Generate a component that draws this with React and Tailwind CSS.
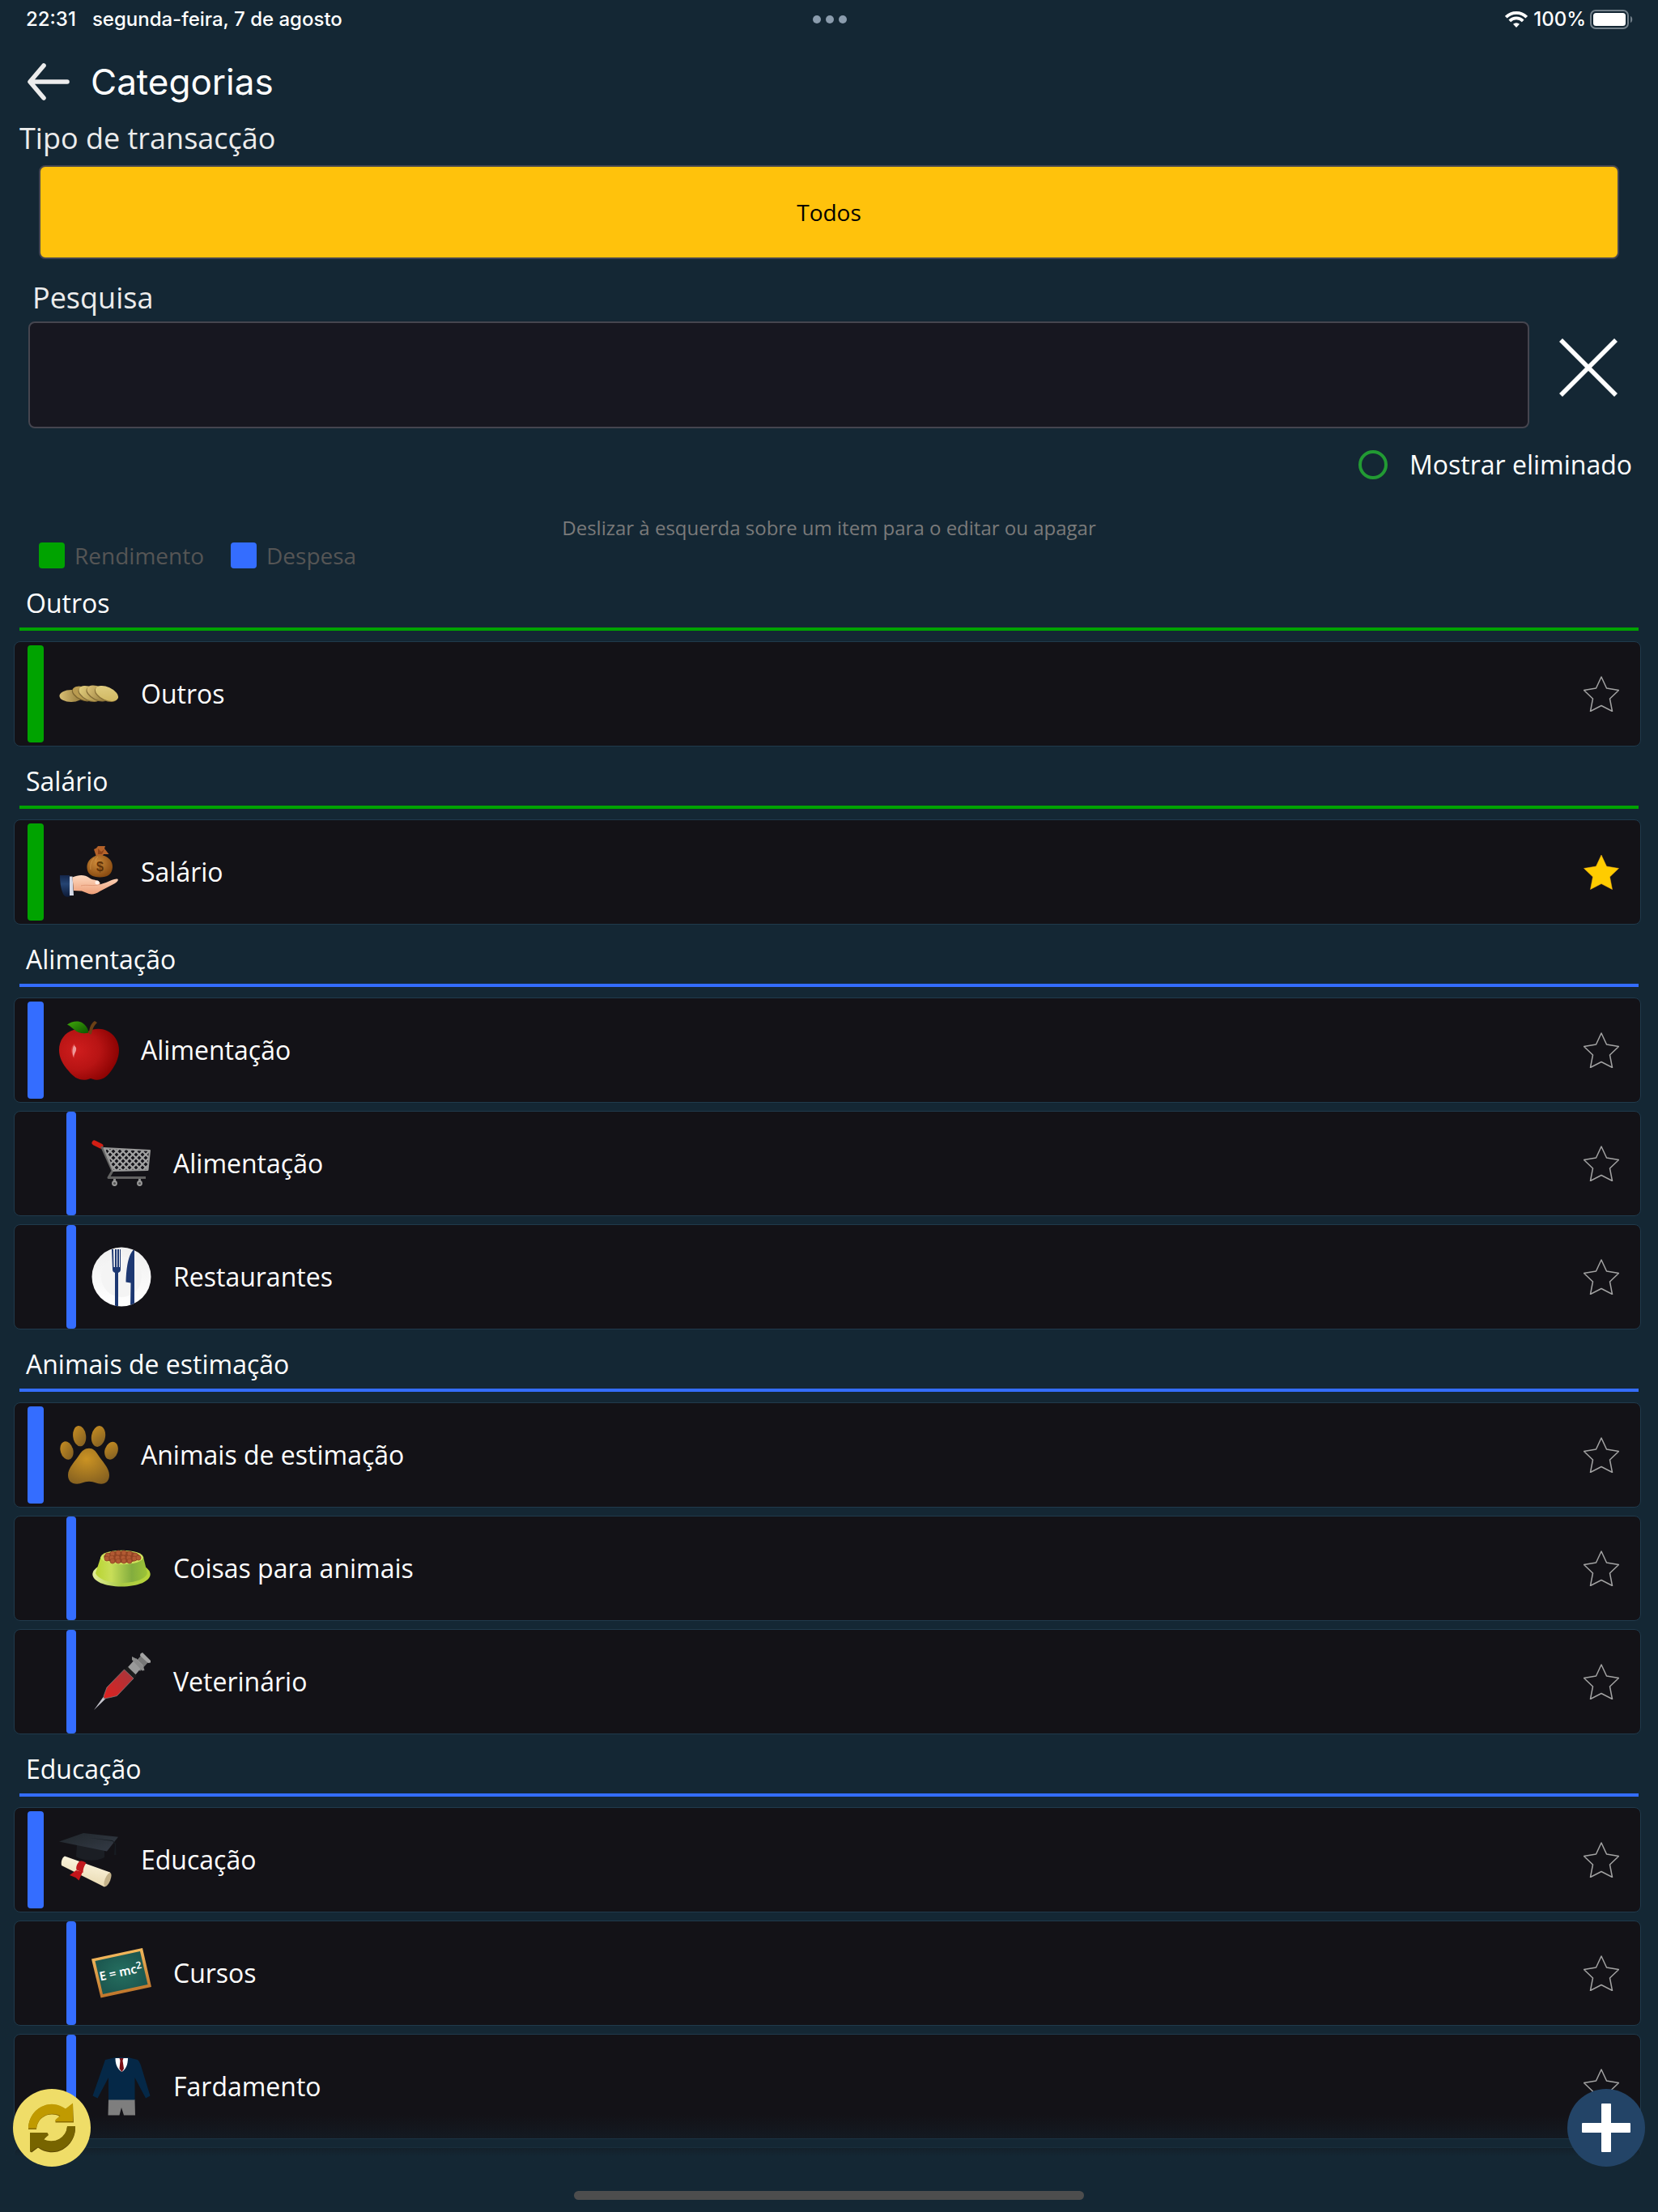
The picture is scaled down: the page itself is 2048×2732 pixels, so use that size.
import React, { useState } from "react";

const GREEN = { bar: "bg-[#00a300]" };
const BLUE = { bar: "bg-[#346dff]" };

function Svg({ children }) {
  return (
    <svg viewBox="0 0 74 74" className="size-[74px] shrink-0" aria-hidden="true">
      {children}
    </svg>
  );
}

function Coins() {
  return (
    <Svg>
      <defs>
        <linearGradient id="coinA" x1="0" x2="1">
          <stop offset="0" stopColor="#d9bf74" />
          <stop offset="1" stopColor="#8f7536" />
        </linearGradient>
        <linearGradient id="coinB" x1="0" x2="1">
          <stop offset="0" stopColor="#e0cc7c" />
          <stop offset="1" stopColor="#a98d45" />
        </linearGradient>
        <linearGradient id="coinC" x1="0" y1="0" x2="1" y2="1">
          <stop offset="0" stopColor="#e3d086" />
          <stop offset="1" stopColor="#cdb45c" />
        </linearGradient>
      </defs>
      <ellipse cx="15" cy="39.500" rx="14.500" ry="7.500" fill="url(#coinA)" />
      <ellipse cx="29" cy="37.500" rx="14" ry="7.500" transform="rotate(24 29 37.500)" fill="#7d6630" />
      <ellipse cx="30" cy="36.500" rx="14" ry="7.500" transform="rotate(24 30 36.500)" fill="#b99b50" />
      <ellipse cx="37" cy="37.500" rx="14.500" ry="8" transform="rotate(26 37 37.500)" fill="#87703a" />
      <ellipse cx="38" cy="36.500" rx="14.500" ry="8" transform="rotate(26 38 36.500)" fill="url(#coinB)" />
      <ellipse cx="47" cy="37" rx="14.500" ry="8" transform="rotate(26 47 37)" fill="#856d36" />
      <ellipse cx="48" cy="36" rx="14.500" ry="8" transform="rotate(26 48 36)" fill="url(#coinA)" />
      <ellipse cx="58" cy="37.500" rx="15" ry="8" transform="rotate(24 58 37.500)" fill="#8b7238" />
      <ellipse cx="59" cy="36.500" rx="15" ry="8" transform="rotate(24 59 36.500)" fill="url(#coinC)" />
    </Svg>
  );
}

function HandMoney() {
  return (
    <Svg>
      <defs>
        <radialGradient id="bag" cx="0.4" cy="0.35" r="0.7">
          <stop offset="0" stopColor="#cc8a3a" />
          <stop offset="1" stopColor="#86480f" />
        </radialGradient>
        <linearGradient id="skin" x1="0" y1="0" x2="0" y2="1">
          <stop offset="0" stopColor="#fdd9c0" />
          <stop offset="1" stopColor="#ee9f78" />
        </linearGradient>
        <linearGradient id="sleeve" x1="0" y1="0" x2="0" y2="1">
          <stop offset="0" stopColor="#14264a" />
          <stop offset="0.4" stopColor="#254473" />
          <stop offset="1" stopColor="#0d1a36" />
        </linearGradient>
      </defs>
      <path d="M43 9 46 7.500 48 5h9l-1 3 5.500 7H55l-2 3h-7z" fill="#b4622a" />
      <path d="M48 8l4 4 4-3-3 6h-5z" fill="#8f4418" />
      <path d="M45 17c-7 3-11 8-10.500 15 .5 8 7 11.500 16 11.500S65.500 40 66 31c.2-7-4-11.500-10-14-4-1.500-8-1.500-11 0z" fill="url(#bag)" />
      <path d="M43 20c-3 3-5 8-4 14M48 18c-2 2-3 4-3 6" stroke="#e0a052" strokeWidth="1" fill="none" opacity=".6" />
      <text x="50.500" y="35.500" textAnchor="middle" fontSize="16" fontWeight="700" fontFamily="Liberation Sans, sans-serif" fill="#5f3208">$</text>
      <path d="M1 41h12l1 26c-5 2-8 0-9.500-4C2 57 1 49 1 41z" fill="url(#sleeve)" />
      <path d="M13 42.500h3.500L18 66h-5z" fill="#d5d9e6" />
      <path d="M16.500 43.500C24 40 32 40 37 44c4 3 8 2.500 11 4 3 1.500 3 3 2 4.500l8-2.500c5-2 10-5 14-4.500 2 1 0 3.500-3 5.500L50 61c-4 3-9 4-13 3l-9-3.500-10-.5z" fill="url(#skin)" />
      <path d="M27 54c6-2 16 1 23-1.500" stroke="#e29a78" strokeWidth="1" fill="none" />
      <circle cx="47" cy="50" r="2.500" fill="#fff0e8" />
    </Svg>
  );
}

function Apple() {
  return (
    <Svg>
      <defs>
        <radialGradient id="apple" cx="0.3" cy="0.42" r="0.75">
          <stop offset="0" stopColor="#cf1d1d" />
          <stop offset="0.5" stopColor="#b81414" />
          <stop offset="1" stopColor="#850000" />
        </radialGradient>
        <linearGradient id="leaf" x1="0" y1="0" x2="1" y2="1">
          <stop offset="0" stopColor="#3fa80a" />
          <stop offset="1" stopColor="#0d5400" />
        </linearGradient>
      </defs>
      <path d="M35 14C43 10 52 9.500 59 13c9 4 15 13 15 24 0 9-4 18-10 26-6 8-11 11-18 10.700-3-.2-5-1.200-7-1.700-2 .5-4 1.500-7 1.700-9 .3-14-3.700-20-10.700C4 54 0 46 0 37 0 25 7 15 18 12c6-1.500 12 0 17 2z" fill="url(#apple)" />
      <path d="M37 16c0-6 3-13 7-15l3 2c-4 4-6 8-7 14-1 1-3 0-3-1z" fill="#6b4015" />
      <path d="M10 5.500C16 1 24 .5 29 3.500c4 2.500 7 7 7.500 12-7 2-14 0-18-4C15 9 14 7 10 5.500z" fill="url(#leaf)" />
      <path d="M18.500 29c-5 6-4 11 0 18 1-6 4-13 0-18z" fill="#e45050" opacity=".6" />
      <path d="M18.500 31c-2.500 4-2.500 9-.5 15 0-5 4-7 3-12z" fill="#e99" />
    </Svg>
  );
}

function Cart() {
  return (
    <Svg>
      <defs>
        <pattern id="mesh" width="8" height="8" patternUnits="userSpaceOnUse" x="3" y="2">
          <rect width="8" height="8" fill="#15141a" />
          <path d="M-1-1l10 10M9-1L-1 9" stroke="#a3a3a3" strokeWidth="2.200" />
        </pattern>
      </defs>
      <path d="M3.500 11.500l8 4" stroke="#d31e14" strokeWidth="6" strokeLinecap="round" />
      <path d="M12.500 16L26 46l-5 8.500h46" stroke="#626262" strokeWidth="3" fill="none" strokeLinejoin="round" />
      <path d="M15.500 18L72 21l-2.500 24L27 46z" fill="url(#mesh)" stroke="#989898" strokeWidth="2" strokeLinejoin="round" />
      <path d="M28.500 56v4M59.500 56v4" stroke="#888" strokeWidth="3" />
      <circle cx="28.500" cy="61.500" r="2.500" fill="#555" stroke="#999" strokeWidth="1.800" />
      <circle cx="59.500" cy="61.500" r="2.500" fill="#555" stroke="#999" strokeWidth="1.800" />
    </Svg>
  );
}

function Plate() {
  return (
    <Svg>
      <defs>
        <linearGradient id="plate" x1="0" y1="0" x2="0" y2="1">
          <stop offset="0" stopColor="#efefef" />
          <stop offset="1" stopColor="#fff" />
        </linearGradient>
        <clipPath id="plateClip"><circle cx="37" cy="37" r="36.500" /></clipPath>
      </defs>
      <circle cx="37" cy="37" r="36.500" fill="url(#plate)" />
      <circle cx="37" cy="37" r="25" fill="#f4f4f4" />
      <g fill="#1d3872" clipPath="url(#plateClip)">
        <path d="M25 3h2l.5 22h1.500V3h2v22h1V3h2v22h1V3h1v25c0 2-1 3-3 4v42h-4V32c-2-1-3-2-3-4z" />
        <path d="M53 2.500V74h-5l.5-29.500-6-1C43 27 45 9 53 2.500z" />
      </g>
    </Svg>
  );
}

function Paw() {
  return (
    <Svg>
      <defs>
        <linearGradient id="paw" x1="0.2" y1="0" x2="0.9" y2="1">
          <stop offset="0" stopColor="#c38b22" />
          <stop offset="1" stopColor="#7f5d22" />
        </linearGradient>
        <radialGradient id="pad" cx="0.45" cy="0.3" r="0.8">
          <stop offset="0" stopColor="#cb9323" />
          <stop offset="1" stopColor="#825e20" />
        </radialGradient>
      </defs>
      <g fill="url(#paw)">
        <ellipse cx="9.500" cy="31.500" rx="7.800" ry="11.500" transform="rotate(-16 9.500 31.500)" />
        <ellipse cx="25.200" cy="13.700" rx="8" ry="12.700" transform="rotate(-7 25.200 13.700)" />
        <ellipse cx="48.500" cy="14" rx="8.500" ry="13" transform="rotate(10 48.500 14)" />
        <ellipse cx="64.500" cy="31.700" rx="8" ry="11.200" transform="rotate(18 64.500 31.700)" />
      </g>
      <path d="M37 28.700c5 0 8 3 11 8 5 8 14 16 14 25 0 7-4 11-10 11-6 0-8-3-15-3s-9 3-15 3c-7 0-11-4-11-11 0-9 9-17 14-25 3-5 7-8 12-8z" fill="url(#pad)" />
    </Svg>
  );
}

function Bowl() {
  const kibble = [
    [20, 21], [26, 19], [33, 18], [40, 18], [47, 19], [54, 21],
    [19, 25], [25, 24], [32, 24], [39, 24], [46, 24], [53, 25], [58, 24],
    [26, 28], [33, 28], [40, 28], [47, 28],
  ];
  return (
    <Svg>
      <defs>
        <linearGradient id="bowl" x1="0" x2="1">
          <stop offset="0" stopColor="#b9d432" />
          <stop offset="0.3" stopColor="#c8de58" />
          <stop offset="0.7" stopColor="#83ad3e" />
          <stop offset="1" stopColor="#9dc437" />
        </linearGradient>
        <linearGradient id="bowlBase" x1="0" x2="1">
          <stop offset="0" stopColor="#e4f09a" />
          <stop offset="0.5" stopColor="#a9c944" />
          <stop offset="1" stopColor="#b7d53a" />
        </linearGradient>
      </defs>
      <path d="M1.300 44C2 39 6 36 10 34h54c4 2 8 5 8.700 10 0 9-15 15.500-35.700 15.500S1.300 53 1.300 44z" fill="url(#bowlBase)" />
      <path d="M11.500 23h52.500l5 20c-2 7-15 12-32 12S8 50 5 43z" fill="url(#bowl)" />
      <ellipse cx="37.700" cy="23.500" rx="26.400" ry="8.700" fill="#cfe25c" />
      <ellipse cx="37.700" cy="22.800" rx="22.500" ry="7.300" fill="#8f4424" />
      {kibble.map(([x, y]) => (
        <circle key={x + "-" + y} cx={x} cy={y} r="3" fill="#b15a33" stroke="#934524" strokeWidth=".8" />
      ))}
    </Svg>
  );
}

function Syringe() {
  return (
    <Svg>
      <defs>
        <linearGradient id="blood" x1="0" y1="1" x2="1" y2="0">
          <stop offset="0" stopColor="#e0201f" />
          <stop offset="1" stopColor="#a2383e" />
        </linearGradient>
      </defs>
      <path d="M3 72L14.500 56l3 2z" fill="#c4c4cc" />
      <path d="M52 15l10-11 8 9-10 11z" fill="#777" />
      <path d="M60.500 2.500 63 1l10 10v2.500l-3 .5-10-9z" fill="#a4a4a4" />
      <path d="M45 19l10-11 9 9-11 13z" fill="#9a9a9a" />
      <path d="M50 6l4 2 10 10 1.500 5-3 .5L50 10z" fill="#8a8a8a" />
      <path d="M41.500 21.500l3-3L56 29.500l-3 3.500z" fill="#1c1c1c" />
      <path d="M40.500 22L52 33 31.500 54.500l-8 2-8 1.500L15 55l4-11z" fill="url(#blood)" stroke="#7d7d7d" strokeWidth=".8" />
    </Svg>
  );
}

function Graduation() {
  return (
    <Svg>
      <defs>
        <linearGradient id="cap" x1="0" y1="0" x2="1" y2="1">
          <stop offset="0" stopColor="#20262b" />
          <stop offset="1" stopColor="#343b46" />
        </linearGradient>
        <linearGradient id="scroll" x1="0.3" y1="0" x2="0" y2="1">
          <stop offset="0" stopColor="#fdf6e0" />
          <stop offset="1" stopColor="#e3d2a6" />
        </linearGradient>
      </defs>
      <path d="M22 18l34 5v11c-8 5-26 5-35-1z" fill="#1b1e24" />
      <path d="M0 14.500L30 4l43 4.700L59 26.500z" fill="url(#cap)" />
      <path d="M38 10l28 4 3 4-1 13h2.500l-.5-14-4-4z" fill="#171c22" />
      <path d="M7 32.500l56 20c2 6-2 15-7 18L3 44c-1-5 1-10 4-11.500z" fill="url(#scroll)" />
      <ellipse cx="60" cy="61.500" rx="3.300" ry="9" transform="rotate(22 60 61.500)" fill="#c4b28a" />
      <path d="M25 39c3-1 6 0 8.500 2-3 4-4 8-4 12l-8-3.500c-1-4 1-8 3.500-10.500z" fill="#c21a1e" />
      <path d="M21 50l8 2-4.500 10.500-4-3.500-7.500-3z" fill="#c3141a" />
    </Svg>
  );
}

function Chalkboard() {
  return (
    <Svg>
      <defs>
        <linearGradient id="wood" x1="0" y1="0" x2="0.200" y2="1">
          <stop offset="0" stopColor="#fcc566" />
          <stop offset="1" stopColor="#bf752b" />
        </linearGradient>
        <radialGradient id="slate">
          <stop offset="0" stopColor="#256f60" />
          <stop offset="1" stopColor="#1c5850" />
        </radialGradient>
      </defs>
      <path d="M0 19.500L63 6l11 48-62.500 13.500z" fill="url(#wood)" />
      <path d="M4.500 22L60 10l9.500 41-55.500 12z" fill="url(#slate)" />
      <text x="11" y="46.500" transform="rotate(-12 11 46.500)" fontSize="15" fontWeight="600" fontFamily="Noto Sans, sans-serif" fill="#fff">
        E = mc<tspan dy="-5" fontSize="12">2</tspan>
      </text>
    </Svg>
  );
}

function Uniform() {
  return (
    <Svg>
      <path d="M21 53h32.500l.5 19.600H40L37 63l-2.500 9.600H20.500z" fill="#7e7e7e" />
      <path d="M17 4l13-3h15l12 3c2 2 3 4 4 7l11.500 37.500L67 51.500 53.500 26v27.500H21V26L7.500 51.500 1.500 48.500z" fill="#052847" />
      <path d="M29.500 2h15.500c0 7-2 13-7.500 17-6-4-8-10-8-17z" fill="#fff" />
      <path d="M34.500 2h5l-1 3 1.500 10-2.500 4-3-4 1-10z" fill="#7b1016" />
    </Svg>
  );
}

function Star({ filled }) {
  return (
    <svg viewBox="0 0 44 44" className="size-11" aria-hidden="true">
      <path
        d="M22 1l6.500 14 15 2.500L32.500 28l3 15.500L22 36.500 8.500 43.500l3-15.500L.5 17.500l15-2.500z"
        fill={filled ? "#ffcc00" : "none"}
        stroke={filled ? "#ffb21a" : "#a3a3a3"}
        strokeWidth={filled ? 0.5 : 1.5}
        strokeLinejoin="round"
      />
    </svg>
  );
}

const groups = [
  { name: "Outros", tone: GREEN, items: [{ name: "Outros", icon: Coins }] },
  { name: "Salário", tone: GREEN, items: [{ name: "Salário", icon: HandMoney, fav: true }] },
  {
    name: "Alimentação",
    tone: BLUE,
    items: [
      { name: "Alimentação", icon: Apple },
      { name: "Alimentação", icon: Cart, child: true },
      { name: "Restaurantes", icon: Plate, child: true },
    ],
  },
  {
    name: "Animais de estimação",
    tone: BLUE,
    items: [
      { name: "Animais de estimação", icon: Paw },
      { name: "Coisas para animais", icon: Bowl, child: true },
      { name: "Veterinário", icon: Syringe, child: true },
    ],
  },
  {
    name: "Educação",
    tone: BLUE,
    items: [
      { name: "Educação", icon: Graduation },
      { name: "Cursos", icon: Chalkboard, child: true },
      { name: "Fardamento", icon: Uniform, child: true },
      { child: true },
    ],
  },
];

function Row({ item, tone }) {
  const [fav, setFav] = useState(!!item.fav);
  const Icon = item.icon;
  return (
    <li className="ml-[17px] mr-[21px] flex h-[130px] items-center rounded-lg border border-[#203a4c] bg-[#131217] pr-[26px]">
      {item.child ? (
        <span className={"ml-16 mr-[19px] h-32 w-3 shrink-0 rounded " + tone.bar} />
      ) : (
        <span className={"ml-4 mr-[19px] h-[120px] w-5 shrink-0 rounded " + tone.bar} />
      )}
      {Icon && (
        <>
          <Icon />
          <span className="ml-[27px] flex-1 text-[32px] leading-[44px]">{item.name}</span>
          <button type="button" aria-label={"Favorito: " + item.name} aria-pressed={fav} onClick={() => setFav(!fav)}>
            <Star filled={fav} />
          </button>
        </>
      )}
    </li>
  );
}

function StatusBar() {
  return (
    <div className="grid h-12 shrink-0 grid-cols-3 items-center pl-8 pr-[30px] font-['Inter',sans-serif] text-[24px] leading-8 font-medium">
      <div className="flex gap-5">
        <span>22:31</span>
        <span>segunda-feira, 7 de agosto</span>
      </div>
      <div className="flex justify-center gap-1.5">
        <span className="size-2.5 rounded-full bg-[#8b9cad]" />
        <span className="size-2.5 rounded-full bg-[#8b9cad]" />
        <span className="size-2.5 rounded-full bg-[#8b9cad]" />
      </div>
      <div className="flex items-center justify-end">
        <svg viewBox="0 0 28 20" className="h-5 w-7" aria-hidden="true">
          <g fill="none" stroke="#fff" strokeWidth="3.800">
            <path d="M1.300 7.200a18 18 0 0 1 25.400 0" />
            <path d="M5.800 11.800a11.600 11.600 0 0 1 16.400 0" />
          </g>
          <path d="M14 20l-4-4.200a5.800 5.800 0 0 1 8 0z" fill="#fff" />
        </svg>
        <span className="ml-[7px]">100%</span>
        <svg viewBox="0 0 54 24" className="ml-[5px] h-6 w-[54px]" aria-hidden="true">
          <rect x="1" y="1" width="46" height="22" rx="6" fill="none" stroke="#73808a" strokeWidth="2" />
          <rect x="4" y="4" width="40" height="16" rx="3.500" fill="#fff" />
          <path d="M50 8c3 1 3 7 0 8z" fill="#73808a" />
        </svg>
      </div>
    </div>
  );
}

export default function App() {
  const [query, setQuery] = useState("");
  return (
    <div className="relative flex h-screen flex-col overflow-hidden bg-[#142734] font-['Open_Sans','Noto_Sans',sans-serif] text-white">
      <StatusBar />

      <header className="flex h-[106px] shrink-0 items-center gap-[26px] pl-[34px]">
        <button type="button" aria-label="Voltar">
          <svg viewBox="0 0 52 48" className="h-12 w-[52px]" fill="none" stroke="#ececec" strokeWidth="5.600" strokeLinecap="round" strokeLinejoin="round" aria-hidden="true">
            <path d="M20 4L3 24l17 20M5 24h44" />
          </svg>
        </button>
        <h1 className="font-['Inter',sans-serif] text-[44px] leading-[56px]">Categorias</h1>
      </header>

      <section className="shrink-0">
        <h2 id="tipo" className="pl-6 text-[36px] leading-[34px] text-[#ececec]">Tipo de transacção</h2>
        <button type="button" aria-labelledby="tipo todos" className="mx-12 mt-4 flex h-[116px] w-[calc(100%-96px)] items-center justify-center rounded-lg border-2 border-[#45454f] bg-[#ffc20c] text-[28px] leading-10 text-black">
          <span id="todos">Todos</span>
        </button>
      </section>

      <section className="shrink-0 pt-6">
        <label htmlFor="pesquisa" className="mb-[5px] block pl-10 text-[36px] leading-[48px] text-[#ececec]">Pesquisa</label>
        <div className="flex items-center pl-[35px] pr-[50px]">
          <input
            id="pesquisa"
            type="text"
            value={query}
            onChange={(e) => setQuery(e.target.value)}
            className="h-[132px] min-w-0 flex-1 rounded-lg border-2 border-[#45454f] bg-[#171720] px-6 text-[32px] outline-none"
          />
          <button type="button" aria-label="Limpar pesquisa" onClick={() => setQuery("")} className="mb-[18px] ml-[37px]">
            <svg viewBox="0 0 72 72" className="size-[72px]" stroke="#fff" strokeWidth="5.600" aria-hidden="true">
              <path d="M2 2l68 68M70 2L2 70" />
            </svg>
          </button>
        </div>
        <label className="flex h-[90px] items-center justify-end gap-[27px] pr-8 text-[32px] leading-[44px]">
          <input type="checkbox" className="size-9 appearance-none rounded-full border-4 border-[#229a33] checked:bg-[#229a33]" />
          Mostrar eliminado
        </label>
      </section>

      <p className="mt-[15px] shrink-0 text-center text-[24px] leading-9 text-[#7a7a7a]">
        Deslizar à esquerda sobre um item para o editar ou apagar
      </p>
      <div className="flex h-8 shrink-0 items-center pl-12 text-[28px] leading-8 text-[#555]">
        <span className="mr-3 size-8 rounded bg-[#00a300]" />
        Rendimento
        <span className="ml-[33px] mr-3 size-8 rounded bg-[#346dff]" />
        Despesa
      </div>

      <main className="relative min-h-0 flex-1 overflow-hidden">
        {groups.map((g) => (
          <section key={g.name}>
            <div className="flex h-[73px] items-end pl-8">
              <h3 className="mb-2 text-[32px] leading-[44px]">{g.name}</h3>
            </div>
            <div className={"ml-6 mr-6 mb-[13px] h-1 " + g.tone.bar} />
            <ul className="flex flex-col gap-2.5">
              {g.items.map((item, i) => (
                <Row key={i} item={item} tone={g.tone} />
              ))}
            </ul>
          </section>
        ))}
        <div className="pointer-events-none absolute inset-x-0 bottom-0 h-16 bg-linear-to-b from-transparent via-[#142734]/40 via-50% to-[#142734] to-80%" />
      </main>

      <footer className="flex h-14 shrink-0 justify-center pt-[30px]">
        <div className="h-[11px] w-[630px] rounded-full bg-[#4d4d4d]" />
      </footer>

      <button type="button" aria-label="Sincronizar" className="absolute bottom-14 left-4 size-24 rounded-full bg-[#efdd68]">
        <svg viewBox="0 0 96 96" className="size-24" aria-hidden="true">
          <path d="M19 50A29 30 0 0 1 65 25l9-7 1 23.500H52.500V39l5-5A19 19 0 0 0 29 50z" fill="#8a6c00" />
          <path d="M19 48.500A29 30 0 0 1 65 24.500l9-7V40H52.500v-2l6-5A20 19 0 0 0 29 48.500z" fill="#c09a00" />
          <path d="M77 47A29 30 0 0 1 31 72.500l-8 6L21 77V55h22.500L38 63A20 19 0 0 0 67 47z" fill="#5b4600" />
          <path d="M77 46A29 30 0 0 1 31 71.500l-9 6h-1V54h21.500l1.500 3-6 5.300A20 19 0 0 0 67 46z" fill="#776400" />
        </svg>
      </button>
      <button type="button" aria-label="Adicionar categoria" className="absolute bottom-14 right-4 size-24 rounded-full bg-[#234467]">
        <svg viewBox="0 0 96 96" className="size-24" aria-hidden="true">
          <rect x="42" y="18" width="12" height="60" rx="1" fill="#fff" />
          <rect x="18" y="42" width="60" height="12" rx="1" fill="#fff" />
        </svg>
      </button>
    </div>
  );
}
